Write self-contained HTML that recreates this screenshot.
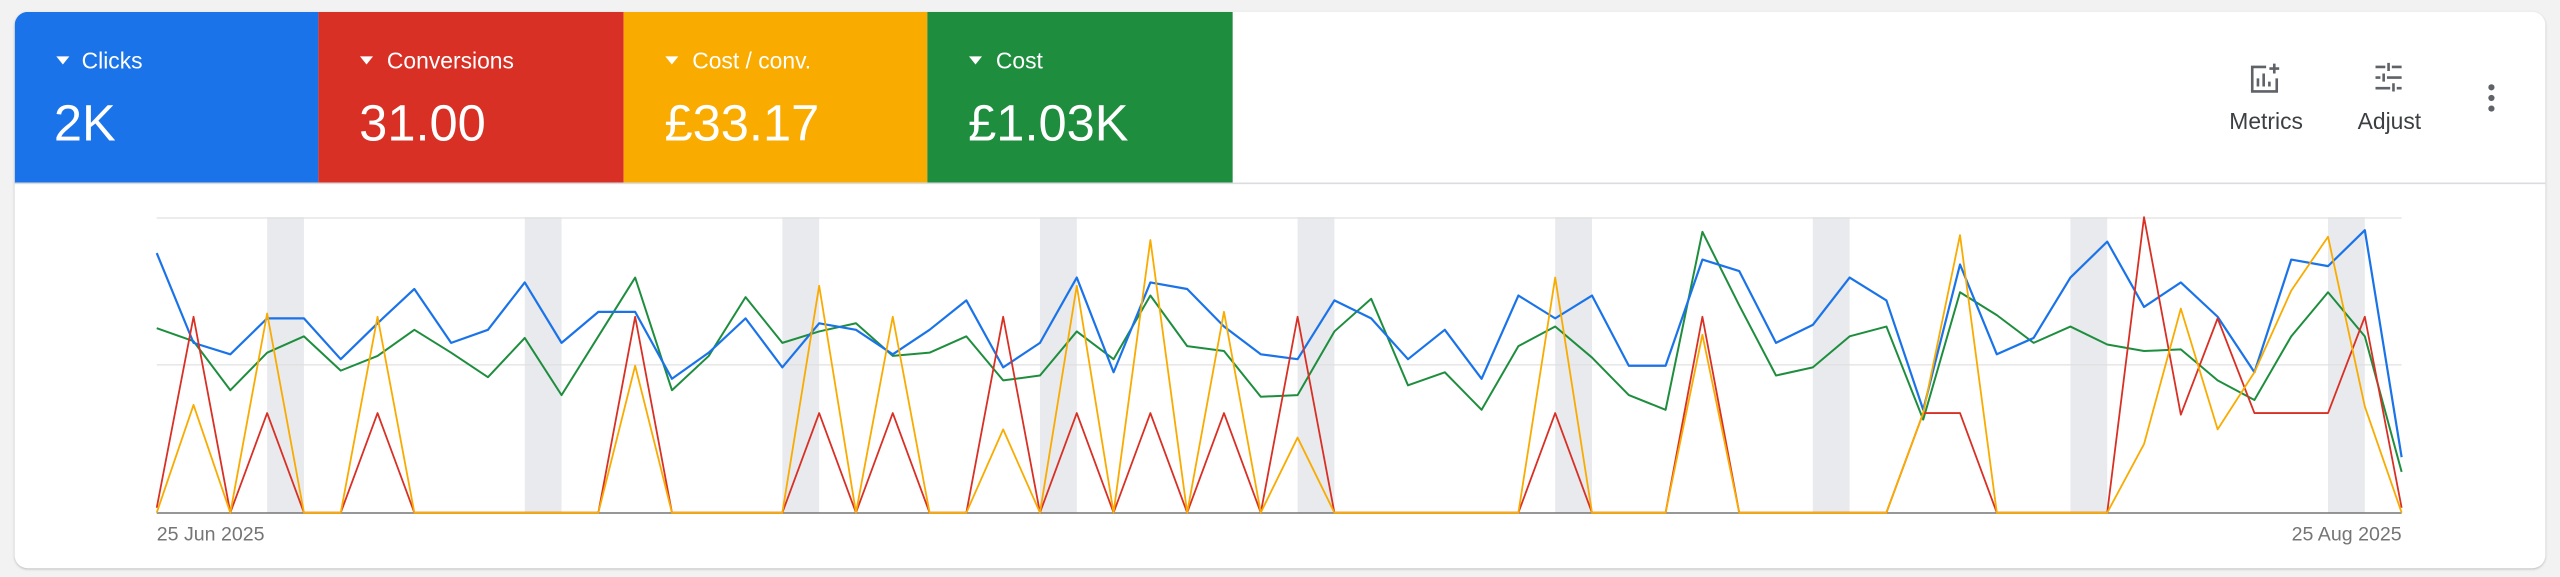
<!DOCTYPE html>
<html><head><meta charset="utf-8"><style>
html,body{margin:0;padding:0;background:#f2f2f2;width:2560px;height:577px;overflow:hidden}
svg{display:block}
text{font-family:"Liberation Sans",Arial,sans-serif}
</style></head><body>
<svg width="2560" height="577" viewBox="0 0 1568 353.4" xmlns="http://www.w3.org/2000/svg">
<defs><filter id="sh" x="-5%" y="-5%" width="110%" height="115%"><feDropShadow dx="0" dy="0.6" stdDeviation="0.8" flood-color="#000" flood-opacity="0.25"/></filter>
<clipPath id="cc"><rect x="9" y="7.3" width="1550" height="340.7" rx="8"/></clipPath></defs>
<rect x="9" y="7.3" width="1550" height="340.7" rx="8" fill="#fff" filter="url(#sh)"/>
<g clip-path="url(#cc)">
<rect x="9" y="7.3" width="186" height="104.7" fill="#1a73e8"/>
<rect x="195" y="7.3" width="187" height="104.7" fill="#d93025"/>
<rect x="382" y="7.3" width="186" height="104.7" fill="#f9ab00"/>
<rect x="568" y="7.3" width="187" height="104.7" fill="#1e8e3e"/>
</g>
<line x1="9" y1="112.3" x2="1559" y2="112.3" stroke="#dadce0" stroke-width="1"/>
<g fill="#fff">
<path d="M34.5 34.5h8l-4 5z"/><text x="50" y="42" font-size="14">Clicks</text><text x="33" y="86" font-size="31">2K</text>
<path d="M220.5 34.5h8l-4 5z"/><text x="237" y="42" font-size="14">Conversions</text><text x="220" y="86" font-size="31">31.00</text>
<path d="M407.5 34.5h8l-4 5z"/><text x="424" y="42" font-size="14">Cost / conv.</text><text x="407" y="86" font-size="31">£33.17</text>
<path d="M593.5 34.5h8l-4 5z"/><text x="610" y="42" font-size="14">Cost</text><text x="593" y="86" font-size="31">£1.03K</text>
</g>
<g fill="none" stroke="#5f6368" stroke-width="1.6">
<path d="M1388 41h-8.5v15h15v-8"/>
<path d="M1383 53v-5M1386.5 53v-8M1390 53v-3"/>
<path d="M1393 39v6M1390 42h6"/>
<path d="M1455 41h6M1465 41h6M1455 47.5h3M1462 47.5h9M1455 54h9M1468 54h3M1463 38.5v5M1460 45v5M1466 51v5"/>
</g>
<g fill="#5f6368"><circle cx="1526" cy="53.5" r="1.9"/><circle cx="1526" cy="60" r="1.9"/><circle cx="1526" cy="66.5" r="1.9"/></g>
<g fill="#3c4043" font-size="14" text-anchor="middle"><text x="1388" y="79">Metrics</text><text x="1463.5" y="79">Adjust</text></g>
<g transform="translate(96,0) scale(22.541,1)" fill="#e8eaed">
<rect x="3" y="133" width="1" height="181"/><rect x="10" y="133" width="1" height="181"/><rect x="17" y="133" width="1" height="181"/><rect x="24" y="133" width="1" height="181"/><rect x="31" y="133" width="1" height="181"/><rect x="38" y="133" width="1" height="181"/><rect x="45" y="133" width="1" height="181"/><rect x="52" y="133" width="1" height="181"/><rect x="59" y="133" width="1" height="181"/>
</g>
<line x1="96" y1="133.5" x2="1471" y2="133.5" stroke="#e0e0e0" stroke-width="0.8"/>
<line x1="96" y1="223.5" x2="1471" y2="223.5" stroke="#e0e0e0" stroke-width="0.8"/>
<line x1="96" y1="314.2" x2="1471" y2="314.2" stroke="#757575" stroke-width="0.9"/>
<g transform="translate(96,0) scale(22.541,1)" fill="none" stroke-linejoin="round">
<polyline vector-effect="non-scaling-stroke" stroke="#1e8e3e" stroke-width="2" points="0,201 1,209 2,239 3,216 4,206 5,227 6,218 7,202 8,216 9,231 10,207 11,242 12,206 13,170 14,239 15,218 16,182 17,210 18,203 19,198 20,218 21,216 22,206 23,233 24,230 25,203 26,220 27,181 28,212 29,215 30,243 31,242 32,203 33,183 34,236 35,228 36,251 37,212 38,200 39,219 40,242 41,251 42,142 43,187 44,230 45,225 46,206 47,200 48,257 49,179 50,193 51,210 52,200 53,211 54,215 55,214 56,233 57,245 58,206 59,179 60,206 61,289"/>
<polyline vector-effect="non-scaling-stroke" stroke="#1a73e8" stroke-width="2.2" points="0,155 1,210 2,217 3,195 4,195 5,220 6,198 7,177 8,210 9,202 10,173 11,210 12,191 13,191 14,232 15,216 16,195 17,225 18,198 19,202 20,217 21,202 22,184 23,225 24,210 25,170 26,228 27,173 28,177 29,200 30,217 31,220 32,184 33,195 34,220 35,202 36,232 37,181 38,195 39,181 40,224 41,224 42,159 43,166 44,210 45,199 46,170 47,184 48,251 49,162 50,217 51,207 52,170 53,148 54,188 55,173 56,194 57,228 58,159 59,163 60,141 61,280"/>
<polyline vector-effect="non-scaling-stroke" stroke="#d93025" stroke-width="1.8" points="0,311 1,194 2,314 3,253 4,314 5,314 6,253 7,314 12,314 13,194 14,314 17,314 18,253 19,314 20,253 21,314 22,314 23,194 24,314 25,253 26,314 27,253 28,314 29,253 30,314 31,194 32,314 37,314 38,253 39,314 41,314 42,194 43,314 47,314 48,253 49,253 50,314 53,314 54,133 55,254 56,195 57,253 58,253 59,253 60,194 61,311"/>
<polyline vector-effect="non-scaling-stroke" stroke="#f9ab00" stroke-width="1.8" points="0,314 1,248 2,314 3,192 4,314 5,314 6,194 7,314 12,314 13,224 14,314 17,314 18,175 19,314 20,194 21,314 22,314 23,263 24,314 25,175 26,314 27,147 28,314 29,191 30,314 31,268 32,314 37,314 38,170 39,314 41,314 42,205 43,314 47,314 48,253 49,144 50,314 53,314 54,272 55,189 56,263 57,228 58,178 59,145 60,249 61,314"/>
</g>
<g fill="#757575" font-size="12"><text x="96" y="331">25 Jun 2025</text><text x="1471" y="331" text-anchor="end">25 Aug 2025</text></g>
</svg>
</body></html>
